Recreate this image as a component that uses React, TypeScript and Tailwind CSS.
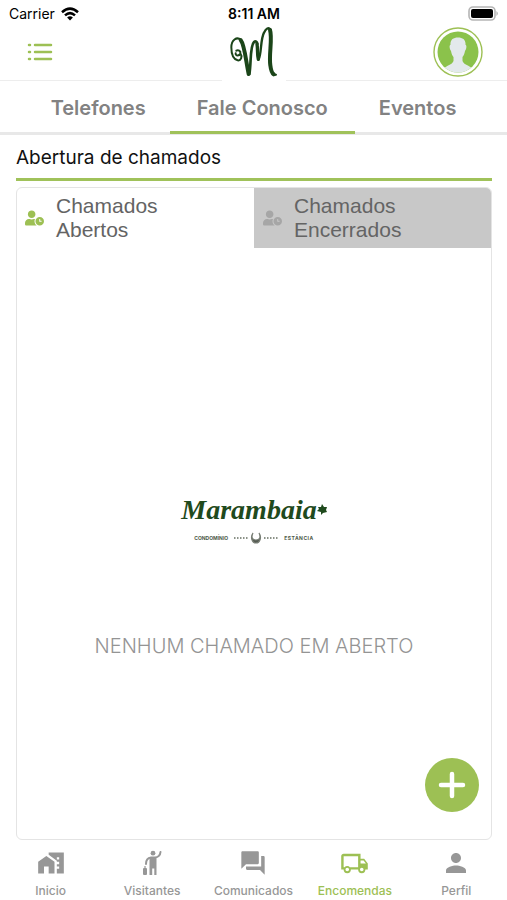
import type { ReactNode } from "react";
import { FaUserClock } from "react-icons/fa";
import { MdForum, MdHomeWork, MdPerson } from "react-icons/md";

function StatusBar() {
  return (
    <div className="grid h-[27px] grid-cols-3 items-center pr-2 pl-[9px] text-sm text-black">
      <div className="flex items-center gap-[6px]">
        <span>Carrier</span>
        <svg viewBox="0 0 18 14" className="h-[14px] w-[18px]" aria-hidden="true">
          <g fill="none" stroke="#000" strokeWidth="2.5">
            <path d="M1 5.2Q9 -2 17 5.2" />
            <path d="M4 8.4Q9 3.8 14 8.4" />
          </g>
          <path d="M6.1 10.5Q9 8 11.9 10.5L9 13.6Z" />
        </svg>
      </div>
      <span className="text-center text-sm font-semibold">8:11 AM</span>
      <svg viewBox="0 0 31 15" className="h-[15px] w-[31px] justify-self-end" aria-hidden="true">
        <rect x="1" y="1" width="26" height="13" rx="4" fill="#fff" stroke="#b5b5b5" strokeWidth="1.6" />
        <rect x="3" y="3" width="22" height="9" rx="2" />
        <path d="M28.5 5Q31 7.5 28.5 10Z" fill="#a5a5a5" />
      </svg>
    </div>
  );
}

function Monogram() {
  return (
    <svg viewBox="0 0 156 168" className="h-14 w-[52px]" role="img" aria-label="Marambaia">
      <g fill="none" stroke="#1b4519" strokeLinecap="round" strokeLinejoin="round">
        <path strokeWidth="6" d="M23 88C22 96 34 97 37 88C39 80 30 77 25 80M37 88C45 99 38 111 29 109C17 106 10 90 10 70C10 49 26 36 39 48" />
        <path strokeWidth="12" d="M38 48C50 62 54 114 62 150" />
        <path strokeWidth="8" d="M64 150C70 122 65 66 78 54C83 50 87 53 88 60" />
        <path strokeWidth="10" d="M87 60C90 78 87 92 91 106" />
        <path strokeWidth="7" d="M92 106C101 88 97 46 108 26C114 13 122 9 127 17" />
        <path strokeWidth="12" d="M126 18C134 42 122 92 127 124C129 141 132 148 137 151" />
        <path strokeWidth="6" d="M138 153L144 152" />
      </g>
    </svg>
  );
}

function Header() {
  return (
    <header className="grid h-[54px] grid-cols-3 items-start border-b border-[#ededed] px-6">
      <button type="button" aria-label="Menu" className="flex h-[50px] w-8 items-center justify-center">
        <svg viewBox="0 0 26 20" className="h-5 w-[26px]" fill="none" stroke="#9dc054" strokeWidth="2.5" strokeLinecap="round">
          <path d="M2 3h1M8 3h16M2 10h1M8 10h16M2 17h1M8 17h16" />
        </svg>
      </button>
      <div className="-mt-[3px] flex h-[57px] w-16 items-start justify-center justify-self-center bg-white">
        <Monogram />
      </div>
      <button type="button" aria-label="Conta" className="justify-self-end">
        <svg viewBox="0 0 50 50" className="h-[50px] w-[50px]">
          <defs>
            <clipPath id="avatar">
              <circle cx="25" cy="25" r="20.5" />
            </clipPath>
          </defs>
          <circle cx="25" cy="25" r="24" fill="#fff" stroke="#9dc054" strokeWidth="1.4" />
          <g clipPath="url(#avatar)">
            <path fill="#8bc24b" d="M0 0h50v50H0z" />
            <path fill="#e3e9ec" d="M17.5 18C17 13 20 10.5 25 10.5S33 13 32.500 18C34 18 33.500 22 32 24C31.500 27 30.500 29 29.500 30V34C31 38 36 38 40 42V50H10V42C14 38 19 38 20.500 34V30C19.500 29 18.500 27 18 24C16.500 22 16 18 17.500 18Z" />
          </g>
        </svg>
      </button>
    </header>
  );
}

const sections = ["Telefones", "Fale Conosco", "Eventos"];

function SectionTabs() {
  return (
    <nav className="flex h-[54px] justify-center border-b-3 border-[#e8e8e8]">
      {sections.map((name) => {
        const active = name === "Fale Conosco";
        return (
          <button
            key={name}
            type="button"
            aria-current={active ? "page" : undefined}
            className={`-mb-[2px] border-b-3 pt-1 text-xl font-semibold text-[#828282] ${active ? "border-[#a0c25a] px-[27px]" : "border-transparent px-6"}`}
          >
            {name}
          </button>
        );
      })}
    </nav>
  );
}

function Brand() {
  return (
    <div className="flex flex-col items-center" role="img" aria-label="Marambaia Condomínio Estância">
      <div className="flex items-center text-[#1f4a1d]">
        <span className="font-['Liberation_Serif',serif] text-[28px] leading-8 font-bold italic">Marambaia</span>
        <svg viewBox="0 0 10 12" className="h-3 w-[10px]" fill="currentColor" aria-hidden="true">
          <path d="M0 7L2 5L1 3L4 3L5 0L7 3L10 3L9 6L10 8L6 9L4 11L4 8Z" />
        </svg>
      </div>
      <div className="mt-[6px] flex items-center gap-[5px] font-['Inter',sans-serif] text-[5px] leading-3 font-bold text-[#4d5948]">
        <span>CONDOMÍNIO</span>
        <svg viewBox="0 0 46 12" className="h-3 w-[46px]" fill="none" aria-hidden="true">
          <path d="M1 6h14M31 6h14" stroke="#8b9288" strokeWidth="2" strokeDasharray="1.500 1.500" />
          <path d="M20 1C17 5 19 11 23 11S29 5 26 1C28 5 27 8 23 8S18 5 20 1Z" fill="#555b52" stroke="#777d74" strokeWidth="1.2" />
        </svg>
        <span className="tracking-widest">ESTÂNCIA</span>
      </div>
    </div>
  );
}

function TicketPanel() {
  return (
    <section className="mt-[6px] flex flex-1 flex-col overflow-hidden rounded-md border border-[#e4e4e4]">
      <div role="tablist" className="grid h-[60px] grid-cols-2 font-['Liberation_Sans',sans-serif] text-[21px] leading-6 text-[#646464]">
        <button type="button" role="tab" aria-selected="true" className="flex items-center gap-3 pl-2 text-left">
          <FaUserClock className="h-5 w-[19px] shrink-0 text-[#9dc054]" />
          <span>Chamados<br />Abertos</span>
        </button>
        <button type="button" role="tab" aria-selected="false" className="flex items-center gap-3 bg-[#c8c8c8] pl-[9px] text-left">
          <FaUserClock className="h-5 w-[19px] shrink-0 text-[#a6a6a6]" />
          <span>Chamados<br />Encerrados</span>
        </button>
      </div>
      <div role="tabpanel" className="flex flex-1 flex-col">
        <div className="flex flex-1 flex-col items-center justify-end gap-[88px] pb-[98px]">
          <Brand />
          <p className="text-xl leading-7 font-light text-[#949494]">NENHUM CHAMADO EM ABERTO</p>
        </div>
        <button
          type="button"
          aria-label="Abrir chamado"
          className="mr-3 mb-[27px] flex size-[54px] items-center justify-center self-end rounded-full bg-[#9dc054]"
        >
          <svg viewBox="0 0 28 28" className="size-7" stroke="#fff" strokeWidth="4.5" strokeLinecap="round">
            <path d="M14 3v22M3 14h22" />
          </svg>
        </button>
      </div>
    </section>
  );
}

function VisitorIcon() {
  return (
    <svg viewBox="0 0 20 26" className="h-[26px] w-5" fill="none" stroke="currentColor" aria-hidden="true">
      <circle cx="11" cy="3.200" r="2.400" fill="currentColor" stroke="none" />
      <path strokeWidth="2" strokeLinecap="round" d="M18.500 2Q18 7 13 7.500H9Q4 8 4 14" />
      <path fill="currentColor" stroke="none" d="M7.500 7H14.500V25H12.300V18.500H10.200V25H7.500Z" />
      <rect x="1" y="18" width="4" height="7" rx="1" fill="currentColor" stroke="none" />
      <path strokeWidth="1.200" d="M3 18v-2" />
    </svg>
  );
}

function TruckIcon() {
  return (
    <svg viewBox="0 0 24 24" className="size-[29px]" fill="currentColor" aria-hidden="true">
      <path d="M18 18.500A1.500 1.500 0 0 0 19.500 17 1.500 1.500 0 0 0 18 15.500 1.500 1.500 0 0 0 16.500 17 1.500 1.500 0 0 0 18 18.500M19.500 9.500H17V12H21.460L19.500 9.500M6 18.500A1.500 1.500 0 0 0 7.500 17 1.500 1.500 0 0 0 6 15.500 1.500 1.500 0 0 0 4.500 17 1.500 1.500 0 0 0 6 18.500M20 8L23 12V17H21A3 3 0 0 1 18 20 3 3 0 0 1 15 17H9A3 3 0 0 1 6 20 3 3 0 0 1 3 17H1V6C1 4.890 1.890 4 3 4H17V8H20M3 6V15H3.760A3 3 0 0 1 6 14 3 3 0 0 1 8.240 15H15V6H3Z" />
    </svg>
  );
}

const destinations: { name: string; icon: ReactNode }[] = [
  { name: "Inicio", icon: <MdHomeWork className="size-7" /> },
  { name: "Visitantes", icon: <VisitorIcon /> },
  { name: "Comunicados", icon: <MdForum className="size-7" /> },
  { name: "Encomendas", icon: <TruckIcon /> },
  { name: "Perfil", icon: <MdPerson className="size-[30px]" /> },
];

function BottomNav() {
  return (
    <nav className="grid h-[60px] grid-cols-5">
      {destinations.map(({ name, icon }) => (
        <a
          key={name}
          href="#"
          className={`flex flex-col items-center pt-[9px] text-xs font-medium ${name === "Encomendas" ? "text-[#9dc054]" : "text-[#979797]"}`}
        >
          <span className="flex h-7 items-center">{icon}</span>
          <span className="mt-[6px] leading-4">{name}</span>
        </a>
      ))}
    </nav>
  );
}

export default function App() {
  return (
    <div className="flex min-h-screen flex-col bg-white font-['Inter',sans-serif]">
      <StatusBar />
      <Header />
      <SectionTabs />
      <main className="flex flex-1 flex-col px-4 pr-[15px]">
        <h1 className="h-[46px] border-b-3 border-[#a0c25a] pt-[9px] text-[19px] leading-7 text-[#111]">Abertura de chamados</h1>
        <TicketPanel />
      </main>
      <BottomNav />
    </div>
  );
}
